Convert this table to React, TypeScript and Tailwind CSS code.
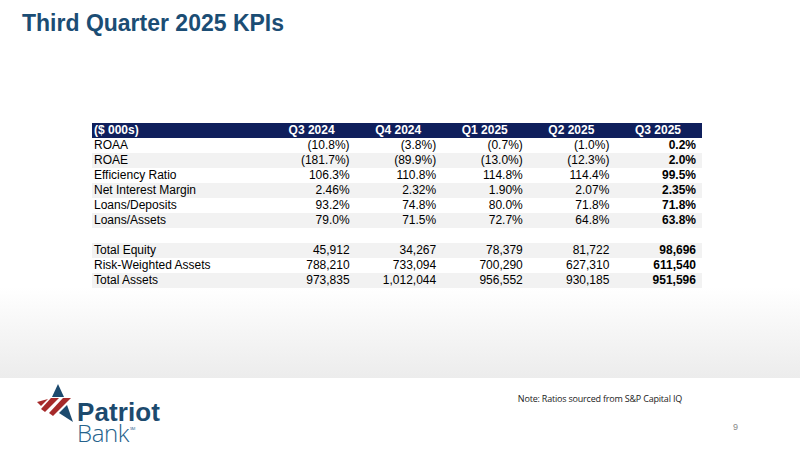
const rows: { label: string; values: string[] }[] = [
  { label: "ROAA", values: ["(10.8%)", "(3.8%)", "(0.7%)", "(1.0%)", "0.2%"] },
  { label: "ROAE", values: ["(181.7%)", "(89.9%)", "(13.0%)", "(12.3%)", "2.0%"] },
  { label: "Efficiency Ratio", values: ["106.3%", "110.8%", "114.8%", "114.4%", "99.5%"] },
  { label: "Net Interest Margin", values: ["2.46%", "2.32%", "1.90%", "2.07%", "2.35%"] },
  { label: "Loans/Deposits", values: ["93.2%", "74.8%", "80.0%", "71.8%", "71.8%"] },
  { label: "Loans/Assets", values: ["79.0%", "71.5%", "72.7%", "64.8%", "63.8%"] },
  { label: "", values: ["", "", "", "", ""] },
  { label: "Total Equity", values: ["45,912", "34,267", "78,379", "81,722", "98,696"] },
  { label: "Risk-Weighted Assets", values: ["788,210", "733,094", "700,290", "627,310", "611,540"] },
  { label: "Total Assets", values: ["973,835", "1,012,044", "956,552", "930,185", "951,596"] },
];

const headers = ["Q3 2024", "Q4 2024", "Q1 2025", "Q2 2025", "Q3 2025"];
const shaded = [1, 3, 5, 7, 9];

function Logo() {
  return (
    <div className="flex items-start">
      <svg width="40" height="40" viewBox="0 0 40 40">
        {/* top point */}
        <polygon points="22,0 28,13 16,13" fill="#1c4a6e" />
        {/* red stripes */}
        <polygon points="1,18 12,15 5,22" fill="#a62a2a" />
        <polygon points="15,14 23,14 9,28 5,25" fill="#a62a2a" />
        <polygon points="27,14 35,14 17,32 13,29" fill="#a62a2a" />
        {/* lower leg */}
        <polygon points="23,29 31,21 37,38" fill="#1c4a6e" />
      </svg>
      <div className="ml-[1px] mt-[18px] flex flex-col">
        <span className="font-['Liberation_Sans',sans-serif] text-[26px] font-bold leading-[21px] tracking-[0.1px] text-[#1c4a6e]">
          Patriot
        </span>
        <span className="flex items-start font-['Open_Sans',sans-serif] text-[24px] font-light leading-[20px] tracking-[-0.4px] text-[#25628c]">
          Bank<span className="ml-[1px] mt-[4px] text-[4px] font-normal leading-[4px]">SM</span>
        </span>
      </div>
    </div>
  );
}

export default function App() {
  return (
    <div className="flex h-[450px] w-[800px] flex-col overflow-hidden bg-white font-['Liberation_Sans',Arial,sans-serif]">
      <div className="flex h-[378px] flex-col bg-gradient-to-b from-white via-white via-[76%] to-[#ececec]">
        <h1 className="pl-[22px] pt-[10px] text-[23px] font-bold leading-[27px] text-[#1b4d74]">
          Third Quarter 2025 KPIs
        </h1>
        <div className="ml-[92px] mt-[86px] w-[610px] text-[12px] leading-[15px] text-black">
          <div className="grid h-[15px] grid-cols-[177px_repeat(5,1fr)] bg-[#0f1f5c] font-bold text-white">
            <div className="pl-[2px]">($ 000s)</div>
            {headers.map((h) => (
              <div key={h} className="pr-[21px] text-right">
                {h}
              </div>
            ))}
          </div>
          {rows.map((r, i) => (
            <div
              key={i}
              className={`grid h-[15px] grid-cols-[177px_repeat(5,1fr)] ${
                shaded.includes(i) ? "bg-[#f2f2f2]" : "bg-white"
              }`}
            >
              <div className="pl-[2px]">{r.label}</div>
              {r.values.map((v, j) => (
                <div key={j} className={`pr-[6px] text-right ${j === 4 ? "font-bold" : ""}`}>
                  {v}
                </div>
              ))}
            </div>
          ))}
        </div>
      </div>
      <div className="flex flex-1">
        <div className="pl-[36px] pt-[6px]">
          <Logo />
        </div>
        <div className="flex flex-1 flex-col items-end pr-[62px]">
          <div className="mr-[56px] mt-[14px] font-['Open_Sans',sans-serif] text-[9px] tracking-[-0.2px] text-[#222]">
            Note: Ratios sourced from S&amp;P Capital IQ
          </div>
          <div className="mt-[15px] text-[9px] text-[#888]">9</div>
        </div>
      </div>
    </div>
  );
}
